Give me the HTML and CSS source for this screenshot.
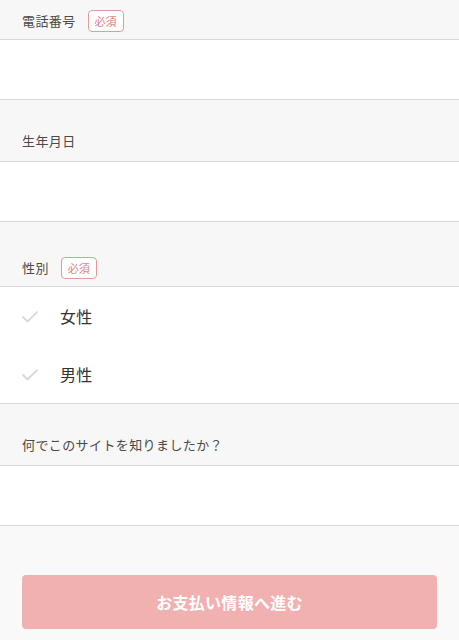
FILE: index.html
```html
<!DOCTYPE html>
<html lang="ja">
<head>
<meta charset="utf-8">
<title>Form</title>
<link rel="stylesheet" href="styles.css">
</head>
<body>
<form class="form">
  <div class="label label-first">
    <span class="label-text">電話番号</span>
    <span class="badge">必須</span>
  </div>
  <div class="field"></div>

  <div class="label">
    <span class="label-text">生年月日</span>
  </div>
  <div class="field"></div>

  <div class="label label-badge">
    <span class="label-text">性別</span>
    <span class="badge">必須</span>
  </div>
  <div class="options">
    <div class="option">
      <svg class="check" width="16" height="12" viewBox="0 0 16 12"><polyline points="1,6 5.5,10.5 15,1.2" fill="none" stroke="#d9d9d9" stroke-width="1.8" stroke-linecap="round" stroke-linejoin="round"/></svg>
      <span class="option-text">女性</span>
    </div>
    <div class="option">
      <svg class="check" width="16" height="12" viewBox="0 0 16 12"><polyline points="1,6 5.5,10.5 15,1.2" fill="none" stroke="#d9d9d9" stroke-width="1.8" stroke-linecap="round" stroke-linejoin="round"/></svg>
      <span class="option-text">男性</span>
    </div>
  </div>

  <div class="label">
    <span class="label-text">何でこのサイトを知りましたか？</span>
  </div>
  <div class="field"></div>

  <div class="footer">
    <button type="button" class="submit">お支払い情報へ進む</button>
  </div>
</form>
</body>
</html>
```

FILE: styles.css
```css
* { box-sizing: border-box; }
html, body {
  margin: 0;
  padding: 0;
  background: #f7f7f7;
}
body {
  font-family: "Noto Sans CJK JP", "Noto Sans", sans-serif;
  color: #333;
  width: 459px;
  height: 640px;
  overflow: hidden;
}
.form {
  display: flex;
  flex-direction: column;
}
.label {
  display: flex;
  align-items: center;
  gap: 12px;
  height: 61px;
  padding: 30px 22px 9px;
}
.label-first {
  height: 39px;
  padding-top: 10px;
  padding-bottom: 7px;
}
.label-badge {
  height: 64px;
  padding-top: 35px;
  padding-bottom: 7px;
}
.label-text {
  font-size: 13px;
  letter-spacing: 0.4px;
  color: #4a4a4a;
  line-height: 22px;
}
.badge {
  display: inline-flex;
  align-items: center;
  justify-content: center;
  height: 22px;
  padding: 0 6px;
  border: 1.5px solid #e39a9a;
  border-radius: 4px;
  color: #e07f7f;
  font-size: 11px;
  line-height: 1;
  background: #fff;
}
.field {
  height: 61px;
  background: #fff;
  border-top: 1px solid #d8d8d8;
  border-bottom: 1px solid #d8d8d8;
}
.options {
  background: #fff;
  border-top: 1px solid #d8d8d8;
  border-bottom: 1px solid #d8d8d8;
}
.option {
  display: flex;
  align-items: center;
  height: 58px;
  padding-left: 22px;
}
.check {
  flex: none;
  margin-top: 1px;
}
.option-text {
  margin-left: 22px;
  font-size: 16px;
  color: #333;
  letter-spacing: 0.3px;
}
.footer {
  padding: 49px 22px 11px;
  background: #f9f9f9;
}
.submit {
  display: block;
  width: 100%;
  height: 54px;
  border: none;
  border-radius: 4px;
  background: #f2b1b1;
  color: #fff;
  font-family: "Noto Sans CJK JP", "Noto Sans", sans-serif;
  font-size: 16px;
  font-weight: bold;
  letter-spacing: 0.3px;
  cursor: pointer;
}
```
